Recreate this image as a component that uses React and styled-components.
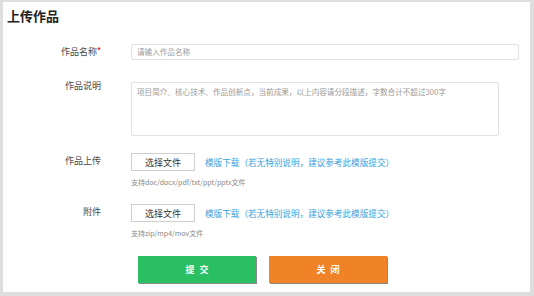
import React from "react";
import styled, { createGlobalStyle } from "styled-components";

const Global = createGlobalStyle`
  html, body { margin: 0; padding: 0; background: #fff; }
  body { font-family: "Noto Sans CJK SC", "Noto Sans", sans-serif; }
  * { box-sizing: border-box; }
`;

const Frame = styled.div`
  width: 534px;
  height: 296px;
  border-style: solid;
  border-color: #dedede;
  border-width: 2px 4px 4px 3px;
  background: #fff;
  display: flex;
  flex-direction: column;
`;

const Title = styled.h1`
  margin: 6px 0 0 4px;
  font-size: 13px;
  line-height: 16px;
  font-weight: 700;
  color: #222;
`;

const Form = styled.div`
  display: flex;
  flex-direction: column;
  margin-top: 20px;
`;

const Row = styled.div`
  display: flex;
  align-items: flex-start;
  margin-top: ${(p) => p.$gap || 0}px;
`;

const Label = styled.div`
  width: 98px;
  flex: none;
  margin-right: 30px;
  text-align: right;
  font-size: 9px;
  line-height: ${(p) => p.$lh || 16}px;
  margin-top: ${(p) => p.$offset || 0}px;
  color: #4a4a4a;
  font-weight: 400;
`;

const Req = styled.span`
  color: #e02020;
  font-size: 8px;
  font-weight: 700;
  vertical-align: top;
  line-height: 12px;
`;

const Field = styled.div`
  display: flex;
  flex-direction: column;
`;

const Input = styled.div`
  width: 388px;
  height: 16px;
  border: 1px solid #e2e2e2;
  border-radius: 2px;
  padding-left: 5px;
  font-size: 7.6px;
  line-height: 14px;
  color: #9a9a9a;
`;

const TextArea = styled.div`
  width: 368px;
  height: 54px;
  border: 1px solid #e2e2e2;
  border-radius: 2px;
  padding: 3px 5px;
  font-size: 7.6px;
  line-height: 11px;
  color: #9a9a9a;
  white-space: nowrap;
`;

const UploadLine = styled.div`
  display: flex;
  align-items: center;
`;

const FileButton = styled.div`
  width: 64px;
  height: 18px;
  border: 1px solid #cfcfcf;
  display: flex;
  align-items: center;
  justify-content: center;
  font-size: 9px;
  color: #333;
  background: #fff;
`;

const Link = styled.a`
  margin-left: 10px;
  font-size: 8.6px;
  line-height: 18px;
  color: #3aa2dc;
  text-decoration: none;
  white-space: nowrap;
`;

const Hint = styled.div`
  margin-top: 6px;
  font-size: 7px;
  line-height: 10px;
  color: #888;
  white-space: nowrap;
`;

const Actions = styled.div`
  display: flex;
  gap: 13px;
  margin: 18px 0 0 135px;
`;

const Action = styled.div`
  width: 118px;
  height: 27px;
  background: ${(p) => p.$bg};
  box-shadow: 1px 1px 0 #8a8a8a;
  display: flex;
  align-items: center;
  justify-content: center;
  color: #fff;
  font-size: 9px;
  font-weight: 700;
  letter-spacing: 5px;
  padding-left: 5px;
`;

export default function App() {
  return (
    <>
      <Global />
      <Frame>
        <Title>上传作品</Title>
        <Form>
          <Row>
            <Label>
              作品名称<Req>*</Req>
            </Label>
            <Input>请输入作品名称</Input>
          </Row>
          <Row $gap={22}>
            <Label $offset={-4}>作品说明</Label>
            <TextArea>
              项目简介、核心技术、作品创新点，当前成果，以上内容请分段描述，字数合计不超过300字
            </TextArea>
          </Row>
          <Row $gap={17}>
            <Label $lh={18} $offset={-1}>作品上传</Label>
            <Field>
              <UploadLine>
                <FileButton>选择文件</FileButton>
                <Link>模版下载（若无特别说明，建议参考此模版提交）</Link>
              </UploadLine>
              <Hint>支持doc/docx/pdf/txt/ppt/pptx文件</Hint>
            </Field>
          </Row>
          <Row $gap={17}>
            <Label $lh={18} $offset={-1}>附件</Label>
            <Field>
              <UploadLine>
                <FileButton>选择文件</FileButton>
                <Link>模版下载（若无特别说明，建议参考此模版提交）</Link>
              </UploadLine>
              <Hint>支持zip/mp4/mov文件</Hint>
            </Field>
          </Row>
        </Form>
        <Actions>
          <Action $bg="#29bf62">提交</Action>
          <Action $bg="#f08228">关闭</Action>
        </Actions>
      </Frame>
    </>
  );
}
